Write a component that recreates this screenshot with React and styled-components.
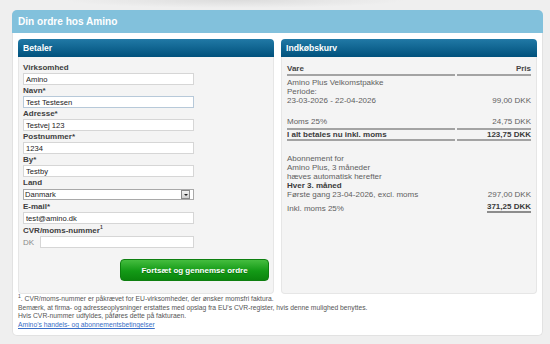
import React from "react";
import styled, { createGlobalStyle } from "styled-components";

const GlobalStyle = createGlobalStyle`
  html, body {
    margin: 0;
    padding: 0;
  }
  body {
    background: #efefef;
    font-family: "Liberation Sans", Arial, sans-serif;
    color: #555;
  }
`;

const Page = styled.div`
  width: 550px;
  height: 344px;
  box-sizing: border-box;
  padding: 10px 6px 0 12px;
  background: radial-gradient(ellipse 170px 8px at 235px 0, #dcdcdc, rgba(239, 239, 239, 0)) no-repeat;
`;

const Card = styled.div`
  width: 531px;
  height: 326px;
  box-sizing: border-box;
  background: #fff;
  border: 1px solid #e2e2e2;
  border-top: none;
  border-radius: 5px;
  display: flex;
  flex-direction: column;
`;

const CardHeader = styled.div`
  height: 23px;
  margin: 0 -1px;
  padding-left: 6px;
  background: #82c1dc;
  border-radius: 5px 5px 0 0;
  color: #fff;
  font-weight: bold;
  font-size: 10.1px;
  line-height: 23px;
`;

const CardBody = styled.div`
  padding: 6px 5px 0 5px;
  display: flex;
  flex-direction: column;
`;

const Columns = styled.div`
  display: grid;
  grid-template-columns: 256px 256px;
  column-gap: 7px;
`;

const Panel = styled.section`
  height: 255px;
  display: flex;
  flex-direction: column;
`;

const PanelHeader = styled.div`
  height: 18px;
  padding-left: 5px;
  background: linear-gradient(#2179a6, #00517c);
  border-radius: 4px 4px 0 0;
  color: #fff;
  font-weight: bold;
  font-size: 8.6px;
  line-height: 18px;
`;

const PanelBody = styled.div`
  flex: 1;
  background: #f4f4f4;
  border: 1px solid #e6e6e6;
  border-top: none;
  border-radius: 0 0 4px 4px;
  padding: 5px 4px 4px;
  display: flex;
  flex-direction: column;
`;

const Field = styled.div`
  display: flex;
  flex-direction: column;
  margin-top: ${(p) => p.$gap || 0}px;
`;

const Label = styled.label`
  font-weight: bold;
  font-size: 8px;
  line-height: 11px;
  color: #3e3e3e;

  sup {
    font-size: 5px;
    vertical-align: 4px;
    line-height: 0;
  }
`;

const TextInput = styled.input`
  width: ${(p) => p.$width || 171}px;
  height: 12px;
  box-sizing: border-box;
  margin: 0;
  padding: 0 2px;
  border: 1px solid ${(p) => (p.$focus ? "#b7c9d9" : "#d6d6d6")};
  background: #fff;
  font-family: "Liberation Sans", Arial, sans-serif;
  font-size: 7.6px;
  color: #222;
  outline: none;
`;

const SelectBox = styled.div`
  width: 171px;
  height: 11px;
  margin-top: 1px;
  box-sizing: border-box;
  border: 1px solid #a9a9a9;
  background: #fff;
  display: flex;
  align-items: stretch;
`;

const SelectNative = styled.select`
  flex: 1;
  appearance: none;
  border: none;
  margin: 0;
  padding: 0 1px;
  background: transparent;
  font-family: "Liberation Sans", Arial, sans-serif;
  font-size: 7.6px;
  line-height: 9px;
  color: #222;
  outline: none;
`;

const SelectArrow = styled.div`
  width: 9px;
  margin: 0 3px 0 0;
  box-sizing: border-box;
  border: 1px solid #888;
  background: linear-gradient(#f2f2f2, #cfcfcf);
  display: flex;
  align-items: center;
  justify-content: center;

  &::after {
    content: "";
    border-left: 2px solid transparent;
    border-right: 2px solid transparent;
    border-top: 2px solid #222;
  }
`;

const CvrRow = styled.div`
  display: flex;
  align-items: center;
  gap: 7px;
`;

const Prefix = styled.span`
  width: 10px;
  font-size: 8px;
  color: #8a8a8a;
`;

const SubmitButton = styled.button`
  align-self: flex-end;
  margin-top: 11px;
  width: 149px;
  height: 22px;
  border: 1px solid #0e7f10;
  border-radius: 4px;
  background: linear-gradient(#45bd3f, #139a16 55%, #0b850d);
  color: #fff;
  font-family: "Liberation Sans", Arial, sans-serif;
  font-weight: bold;
  font-size: 8px;
  text-shadow: 0 1px 0 rgba(0, 0, 0, 0.25);
  cursor: pointer;
`;

const Cart = styled.table`
  width: calc(100% + 2px);
  margin: 0 -1px;
  border-collapse: separate;
  border-spacing: 2px 0;
  font-size: 8px;
  line-height: 9px;
  color: #5f5f5f;
`;

const Th = styled.th`
  padding: 2px 0 1px;
  border-bottom: 2px solid #a3a3a3;
  text-align: ${(p) => (p.$right ? "right" : "left")};
  color: #444;
  font-weight: bold;
`;

const Td = styled.td`
  padding: ${(p) => p.$pad || "1px 0"};
  height: ${(p) => (p.$h ? `${p.$h}px` : "auto")};
  text-align: ${(p) => (p.$right ? "right" : "left")};
  vertical-align: bottom;
  border-bottom: ${(p) => (p.$line ? "2px solid #a3a3a3" : "none")};
  font-weight: ${(p) => (p.$bold ? "bold" : "normal")};
  color: ${(p) => (p.$bold ? "#3a3a3a" : "inherit")};
  white-space: nowrap;
`;

const Subscription = styled.div`
  margin: 13px 1px 0;
  font-size: 8px;
  line-height: 9px;
  color: #5f5f5f;
`;

const Strong = styled.div`
  font-weight: bold;
  color: #3a3a3a;
`;

const SubRow = styled.div`
  display: flex;
  justify-content: space-between;
  align-items: flex-end;
  margin-top: ${(p) => p.$gap || 0}px;
`;

const Total = styled.span`
  font-weight: bold;
  color: #3a3a3a;
  border-bottom: 2px solid #8c8c8c;
  line-height: 9px;
`;

const Notes = styled.div`
  margin-top: 1px;
  font-size: 6.75px;
  line-height: 8.7px;
  color: #555;

  sup {
    font-size: 5px;
    vertical-align: 3px;
    line-height: 0;
  }
`;

const TermsLink = styled.a`
  color: #3a6ec6;
  text-decoration: underline;
`;

const fields = [
  { label: "Virksomhed", value: "Amino" },
  { label: "Navn*", value: "Test Testesen", focus: true },
  { label: "Adresse*", value: "Testvej 123" },
  { label: "Postnummer*", value: "1234" },
  { label: "By*", value: "Testby" },
];

export default function App() {
  return (
    <>
      <GlobalStyle />
      <Page>
        <Card>
          <CardHeader>Din ordre hos Amino</CardHeader>
          <CardBody>
            <Columns>
              <Panel>
                <PanelHeader>Betaler</PanelHeader>
                <PanelBody>
                  {fields.map((f) => (
                    <Field key={f.label}>
                      <Label>{f.label}</Label>
                      <TextInput defaultValue={f.value} $focus={f.focus} />
                    </Field>
                  ))}
                  <Field>
                    <Label>Land</Label>
                    <SelectBox>
                      <SelectNative defaultValue="dk">
                        <option value="dk">Danmark</option>
                      </SelectNative>
                      <SelectArrow />
                    </SelectBox>
                  </Field>
                  <Field $gap={1}>
                    <Label>E-mail*</Label>
                    <TextInput defaultValue="test@amino.dk" />
                  </Field>
                  <Field $gap={1}>
                    <Label>
                      CVR/moms-nummer<sup>1</sup>
                    </Label>
                    <CvrRow>
                      <Prefix>DK</Prefix>
                      <TextInput $width={154} defaultValue="" />
                    </CvrRow>
                  </Field>
                  <SubmitButton type="button">Fortsæt og gennemse ordre</SubmitButton>
                </PanelBody>
              </Panel>

              <Panel>
                <PanelHeader>Indkøbskurv</PanelHeader>
                <PanelBody>
                  <Cart>
                    <thead>
                      <tr>
                        <Th>Vare</Th>
                        <Th $right>Pris</Th>
                      </tr>
                    </thead>
                    <tbody>
                      <tr>
                        <Td $pad="2px 0 0">
                          Amino Plus Velkomstpakke
                          <br />
                          Periode:
                          <br />
                          23-03-2026 - 22-04-2026
                        </Td>
                        <Td $right $pad="2px 0 0">99,00 DKK</Td>
                      </tr>
                      <tr>
                        <Td $h={12} $pad="0" />
                        <Td $h={12} $pad="0" />
                      </tr>
                      <tr>
                        <Td $line $pad="0 0 2px">Moms 25%</Td>
                        <Td $line $right $pad="0 0 2px">24,75 DKK</Td>
                      </tr>
                      <tr>
                        <Td $line $bold $pad="0 0 0">I alt betales nu inkl. moms</Td>
                        <Td $line $bold $right $pad="0 0 0">123,75 DKK</Td>
                      </tr>
                    </tbody>
                  </Cart>
                  <Subscription>
                    <div>Abonnement for</div>
                    <div>Amino Plus, 3 måneder</div>
                    <div>hæves automatisk herefter</div>
                    <Strong>Hver 3. måned</Strong>
                    <SubRow>
                      <span>Første gang 23-04-2026, excl. moms</span>
                      <span>297,00 DKK</span>
                    </SubRow>
                    <SubRow $gap={3}>
                      <span>Inkl. moms 25%</span>
                      <Total>371,25 DKK</Total>
                    </SubRow>
                  </Subscription>
                </PanelBody>
              </Panel>
            </Columns>
            <Notes>
              <div>
                <sup>1</sup>. CVR/moms-nummer er påkrævet for EU-virksomheder, der ønsker momsfri faktura.
              </div>
              <div>
                Bemærk, at firma- og adresseoplysninger erstattes med opslag fra EU's CVR-register, hvis denne mulighed benyttes.
              </div>
              <div>Hvis CVR-nummer udfyldes, påføres dette på fakturaen.</div>
              <TermsLink href="#">Amino's handels- og abonnementsbetingelser</TermsLink>
            </Notes>
          </CardBody>
        </Card>
      </Page>
    </>
  );
}
